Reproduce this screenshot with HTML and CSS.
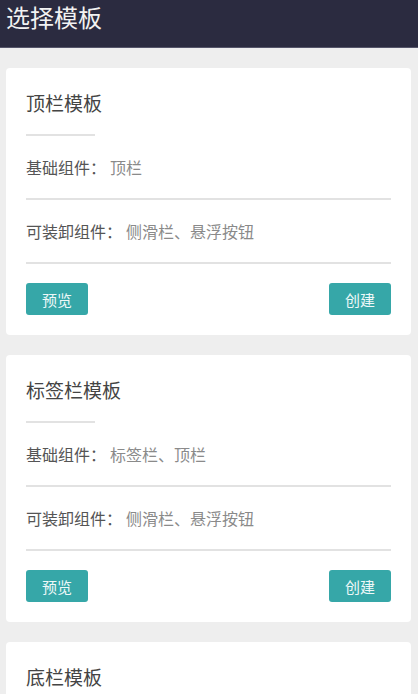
FILE: index.html
```html
<!DOCTYPE html>
<html lang="zh-CN">
<head>
  <meta charset="UTF-8">
  <meta name="viewport" content="width=device-width, initial-scale=1.0">
  <title>选择模板</title>
  <link rel="stylesheet" href="styles.css">
</head>
<body>

  <!-- Top bar -->
  <div class="header">
    <h1>选择模板</h1>
  </div>

  <div class="list">
    <!-- Template cards -->
    <div class="card">
      <h2 class="card-title">顶栏模板</h2>
      <div class="short-line"></div>
      <div class="row">基础组件：<span class="value">顶栏</span></div>
      <div class="row">可装卸组件：<span class="value">侧滑栏、悬浮按钮</span></div>
      <div class="actions">
        <button type="button">预览</button>
        <button type="button">创建</button>
      </div>
    </div>

    <div class="card">
      <h2 class="card-title">标签栏模板</h2>
      <div class="short-line"></div>
      <div class="row">基础组件：<span class="value">标签栏、顶栏</span></div>
      <div class="row">可装卸组件：<span class="value">侧滑栏、悬浮按钮</span></div>
      <div class="actions">
        <button type="button">预览</button>
        <button type="button">创建</button>
      </div>
    </div>

    <div class="card">
      <h2 class="card-title">底栏模板</h2>
      <div class="short-line"></div>
      <div class="row">基础组件：<span class="value">底栏、顶栏</span></div>
      <div class="row">可装卸组件：<span class="value">侧滑栏、悬浮按钮</span></div>
      <div class="actions">
        <button type="button">预览</button>
        <button type="button">创建</button>
      </div>
    </div>
  </div>

</body>
</html>
```

FILE: styles.css
```css
body {
  font-family: "Noto Sans CJK SC", "Noto Sans", sans-serif;
  background-color: #eeeeee;
  color: #555;
  margin: 0;
  padding: 0;
}

.header {
  height: 47px;
  background-color: #2b2b40;
  border-bottom: 1px solid #55556a;
  padding: 0 6px;
}
.header h1 {
  margin: 0;
  padding-top: 1px;
  color: #f2f2f2;
  font-size: 24px;
  font-weight: normal;
  line-height: 32px;
}

.list {
  padding: 20px 7px 0 6px;
}

.card {
  background-color: #fff;
  border-radius: 4px;
  padding: 20px;
  margin-bottom: 20px;
}
.card-title {
  margin: 0;
  font-size: 19px;
  font-weight: normal;
  line-height: 30px;
  color: #444;
}
.short-line {
  width: 69px;
  height: 2px;
  margin-top: 16px;
  background-color: #e2e2e2;
}

.row {
  height: 62px;
  line-height: 62px;
  font-size: 16px;
  color: #555;
  border-bottom: 2px solid #e2e2e2;
}
.row .value {
  margin-left: 4px;
  color: #8a8a8a;
}

.actions {
  display: flex;
  justify-content: space-between;
  margin-top: 19px;
}
.actions button {
  width: 62px;
  height: 32px;
  padding: 0;
  border: none;
  border-radius: 3px;
  background-color: #36a7a8;
  color: #eef8f8;
  font-family: inherit;
  font-size: 15px;
  cursor: pointer;
}
```
